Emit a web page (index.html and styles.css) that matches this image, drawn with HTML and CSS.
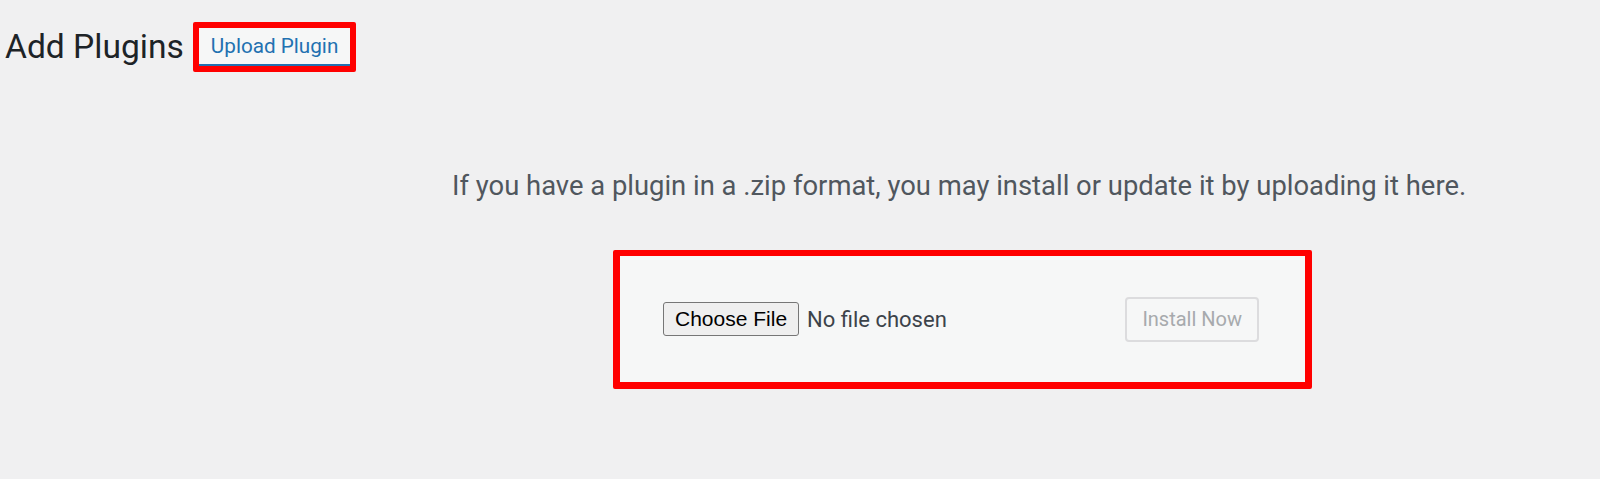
FILE: index.html
```html
<!DOCTYPE html>
<html lang="en">
<head>
<meta charset="utf-8">
<title>Add Plugins</title>
<link rel="stylesheet" href="styles.css">
</head>
<body>
<div class="page">
  <header class="title-row">
    <h1 class="title">Add Plugins</h1>
    <span class="mark mark-title"><a class="title-action" href="#">Upload Plugin</a></span>
  </header>
  <section class="upload">
    <p class="desc">If you have a plugin in a .zip format, you may install or update it by uploading it here.</p>
    <div class="mark mark-form">
      <form class="upload-form">
        <span class="file">
          <span class="choose">Choose File</span>
          <span class="file-name">No file chosen</span>
        </span>
        <span class="install">Install Now</span>
      </form>
    </div>
  </section>
</div>
</body>
</html>
```
FILE: styles.css
```css
* { box-sizing: border-box; }
html, body { margin: 0; padding: 0; }
body {
  background: #f0f0f1;
  font-family: Roboto, "Liberation Sans", sans-serif;
  color: #1d2327;
  width: 1600px;
  height: 479px;
  overflow: hidden;
}
.page { padding-top: 22px; }
.title-row {
  display: flex;
  align-items: center;
  padding-left: 5px;
  height: 50px;
}
.title {
  margin: 0;
  font-size: 33.6px;
  font-weight: 400;
  line-height: 40px;
  color: #1d2327;
}
.mark {
  border: 6px solid #ff0000;
  border-radius: 2px;
}
.mark-title {
  margin-left: 9px;
  display: block;
  height: 50px;
}
.title-action {
  display: flex;
  align-items: center;
  height: 38px;
  padding: 0 12px 0 12px;
  background: #f6f7f7;
  border-bottom: 2px solid #2271b1;
  color: #2271b1;
  text-decoration: none;
  font-size: 20.7px;
}
.upload {
  padding-left: 613px;
  padding-top: 96px;
}
.desc {
  margin: 0 0 0 -161px;
  font-size: 27.4px;
  line-height: 36px;
  color: #50575e;
  white-space: nowrap;
}
.mark-form {
  margin-top: 46px;
  width: 699px;
  height: 139px;
  border-width: 6px 7px 7px 7px;
}
.upload-form {
  display: flex;
  align-items: center;
  justify-content: space-between;
  height: 100%;
  padding: 0 46px 0 43px;
  background: #f6f7f7;
}
.file { display: flex; align-items: center; }
.choose {
  display: flex;
  align-items: center;
  height: 34px;
  padding: 0 11px;
  font-family: "Liberation Sans", Arial, sans-serif;
  font-size: 21px;
  color: #000;
  background: #efefef;
  border: 1px solid #767676;
  border-radius: 3px;
}
.file-name {
  margin-left: 8px;
  font-size: 22px;
  color: #3c434a;
}
.install {
  display: flex;
  align-items: center;
  height: 45px;
  padding: 0 15px;
  font-size: 20px;
  color: #a7aaad;
  background: #f6f7f7;
  border: 2px solid #dcdcde;
  border-radius: 4px;
}
```
